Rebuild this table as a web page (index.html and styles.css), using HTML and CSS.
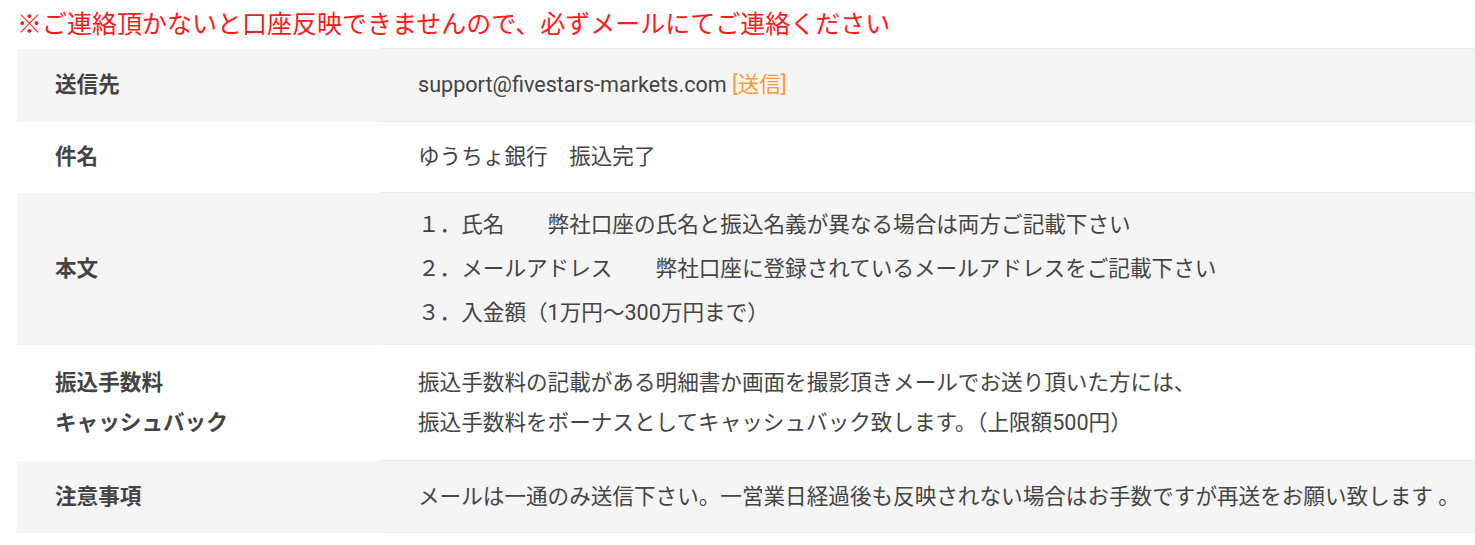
FILE: index.html
```html
<!DOCTYPE html>
<html lang="ja">
<head>
<meta charset="utf-8">
<title>ご連絡</title>
<link rel="stylesheet" href="styles.css">
</head>
<body>
<div class="page">
  <p class="notice">※ご連絡頂かないと口座反映できませんので、必ずメールにてご連絡ください</p>
  <table class="info">
    <tr class="row row-grey r1">
      <th>送信先</th>
      <td>support@fivestars-markets.com <a class="send" href="#">[送信]</a></td>
    </tr>
    <tr class="row row-white r2">
      <th>件名</th>
      <td>ゆうちょ銀行　振込完了</td>
    </tr>
    <tr class="row row-grey r3">
      <th>本文</th>
      <td>
        <div class="line">１．氏名　　弊社口座の氏名と振込名義が異なる場合は両方ご記載下さい</div>
        <div class="line">２．メールアドレス　　弊社口座に登録されているメールアドレスをご記載下さい</div>
        <div class="line">３．入金額（1万円～300万円まで）</div>
      </td>
    </tr>
    <tr class="row row-white r4">
      <th><div>振込手数料</div><div>キャッシュバック</div></th>
      <td>
        <div>振込手数料の記載がある明細書か画面を撮影頂きメールでお送り頂いた方には、</div>
        <div>振込手数料をボーナスとしてキャッシュバック致します。（上限額500円）</div>
      </td>
    </tr>
    <tr class="row row-grey r5">
      <th>注意事項</th>
      <td>メールは一通のみ送信下さい。一営業日経過後も反映されない場合はお手数ですが再送をお願い致します 。</td>
    </tr>
  </table>
</div>
</body>
</html>
```

FILE: styles.css
```css
html, body {
  margin: 0;
  padding: 0;
  background: #ffffff;
}

body {
  font-family: "Roboto", "Noto Sans CJK JP", sans-serif;
  color: #444444;
}

.page {
  padding-left: 17px;
}

.notice {
  margin: 0;
  height: 48px;
  line-height: 50px;
  font-size: 25px;
  color: #ff1a1a;
  white-space: nowrap;
}

.info {
  width: 1458px;
  border-collapse: collapse;
  font-size: 21.6px;
}

.info th,
.info td {
  text-align: left;
  vertical-align: middle;
  padding: 0 0 0 38px;
  white-space: nowrap;
}

.info th {
  width: 325px;
  font-weight: bold;
  color: #444444;
}

.info td {
  border-top: 1px solid #ececec;
  border-bottom: 1px solid #ececec;
}

.row-grey {
  background: #f5f5f5;
}

.row-white {
  background: #ffffff;
}

.r1 th, .r1 td {
  height: 72px;
  line-height: 40px;
}

.r2 th, .r2 td {
  height: 70px;
  line-height: 40px;
}

.r3 th, .r3 td {
  height: 151px;
  line-height: 44px;
}

.r4 th, .r4 td {
  height: 115px;
  line-height: 40px;
}

.r5 th, .r5 td {
  height: 71px;
  line-height: 40px;
}

.send {
  color: #ff9933;
  text-decoration: none;
}
```
